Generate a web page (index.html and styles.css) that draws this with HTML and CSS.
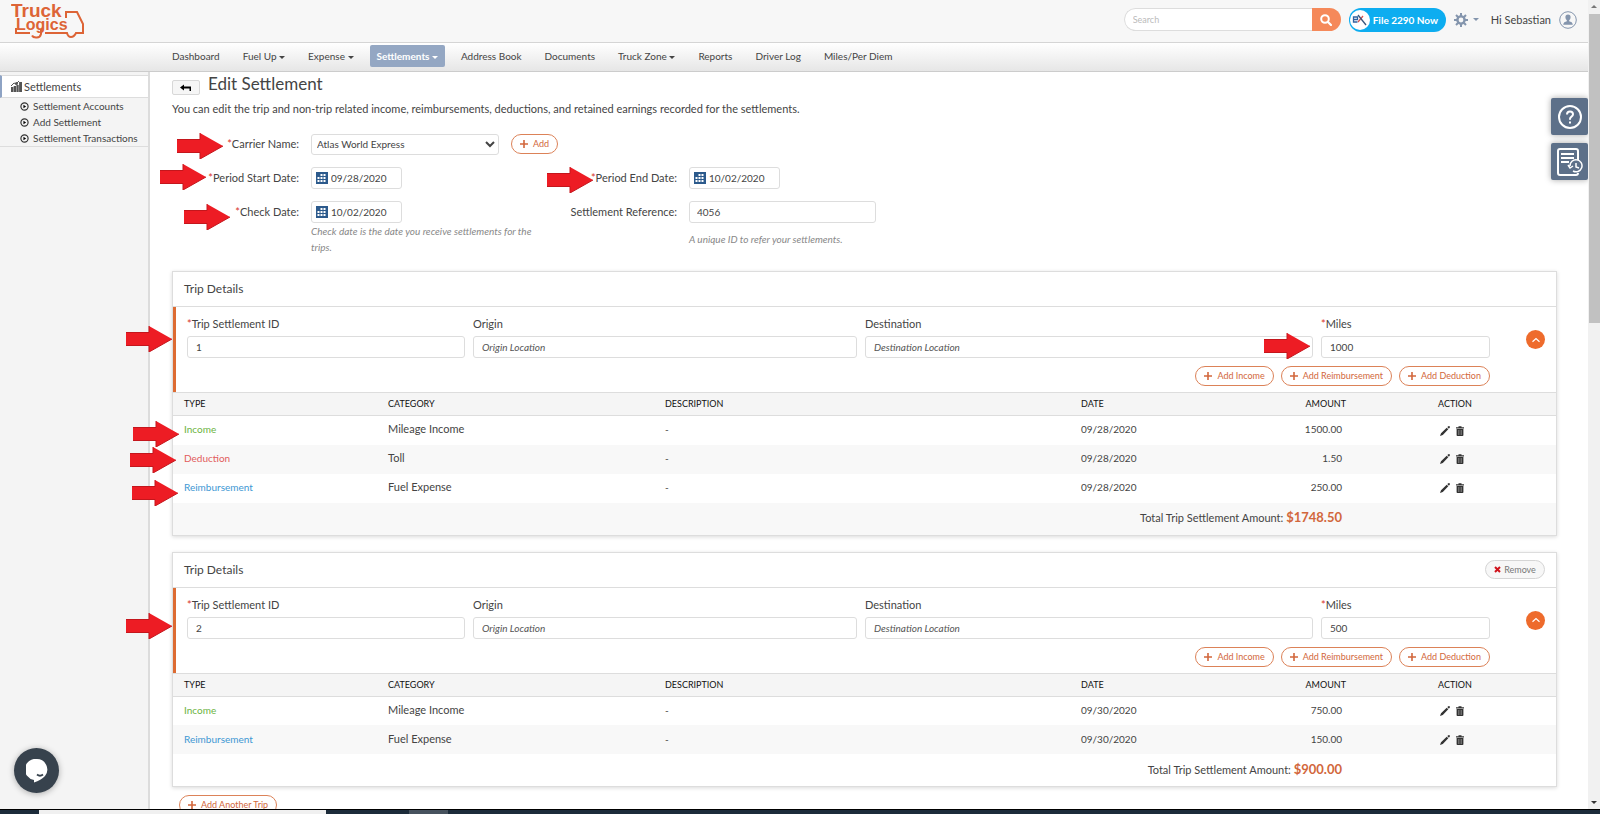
FILE: index.html
```html
<!DOCTYPE html>
<html lang="en">
<head>
    <meta charset="UTF-8">
    <meta name="viewport" content="width=device-width, initial-scale=1.0">
    <title>Edit Settlement - TruckLogics</title>
    <link rel="stylesheet" href="styles.css">
</head>
<body>
    <!-- shared icons -->
    <svg class="sprite" aria-hidden="true">
        <symbol id="plus" viewBox="0 0 8 8"><path d="M3.200 0h1.600v3.200H8v1.600H4.800V8H3.200V4.800H0V3.200h3.200z"/></symbol>
        <symbol id="pencil" viewBox="0 0 10 10"><path d="M0 10l1-2.800L6.700 1.700l1.600 1.600L2.800 9zM7.300 1.100L8.400.2q.5-.4 1 0l.4.400q.4.500 0 1l-.9 1.100z"/></symbol>
        <symbol id="trash" viewBox="0 0 8 10"><path d="M0 1.300h2.500V.3h3v1H8v1.200H0z"/><path d="M.6 3h6.800v6.200q0 .8-.8.800H1.400q-.8 0-.8-.8z"/><path d="M2.500 4v5M4 4v5M5.500 4v5" stroke="#aaa" stroke-width=".5"/></symbol>
        <symbol id="calendar" viewBox="0 0 12 12"><path fill="#2c5a8c" d="M0 0h12v12H0z"/><path fill="#fff" d="M4.500 2h2v2h-2zM7.500 2h2v2h-2zM1.500 5h2v2h-2zM4.500 5h2v2h-2zM7.500 5h2v2h-2zM1.500 8h2v2h-2zM4.500 8h2v2h-2zM7.500 8h2v2h-2z"/></symbol>
        <symbol id="bullet" viewBox="0 0 10 10"><circle cx="5" cy="5" r="4" fill="none" stroke="#333" stroke-width="1.300"/><path d="M3.800 3l3 2-3 2z"/></symbol>
        <symbol id="chevron" viewBox="0 0 10 10"><path d="M1.500 6.700L5 3.500l3.500 3.200" fill="none" stroke="#fff" stroke-width="1.200"/></symbol>
        <symbol id="arrow" viewBox="0 0 46 26"><path d="M0 6.500h23V0l23 13-23 13v-6.500H0z" fill="#ed1c24"/><path d="M0 6.500h23V0M0 19.500h23V26l23-13" fill="none" stroke="#c4161c"/></symbol>
    </svg>

    <div class="window">
        <div class="app">
            <header class="topbar">
                <a href="#" class="logo" aria-label="TruckLogics">
                    <svg width="78" height="38" viewBox="0 0 78 38">
                        <text x="0" y="16" class="word-top">Truck</text>
                        <text x="5" y="29">Logics</text>
                        <path d="M5 27v5h14M30 28v5q-1 4-5 3.500-3 0-4-2M34 32h22q1 4 4 4t5-4h7v-9l-6-12H55v6" fill="none" stroke="#dd6436" stroke-width="2"/>
                    </svg>
                </a>
                <form class="search">
                    <input type="text" placeholder="Search" aria-label="Search">
                    <button type="button" aria-label="Search">
                        <svg width="12" height="12" viewBox="0 0 12 12"><circle cx="5" cy="5" r="3.800" fill="none" stroke="#fff" stroke-width="2"/><path d="M8 8l3 3" stroke="#fff" stroke-width="2.200" stroke-linecap="round"/></svg>
                    </button>
                </form>
                <button type="button" class="file-btn">
                    <svg width="20" height="20" viewBox="0 0 20 20"><circle cx="10" cy="10" r="10" fill="#fff"/><path d="M3.500 9.500H7.500V7H3.500v5H7.500" fill="none" stroke="#2f62a0" stroke-width="1.300"/><path d="M8 12l5-6" stroke="#d9534f" stroke-width="1.300"/><path d="M8 5l8 10" stroke="#38557c" stroke-width="1.300"/></svg>
                    File 2290 Now
                </button>
                <button type="button" class="gear" aria-label="Settings">
                    <svg width="14" height="14" viewBox="0 0 14 14"><circle cx="7" cy="7" r="3.600" fill="none" stroke="#8495ad" stroke-width="2.400"/><path d="M7 0v3M7 11v3M0 7h3M11 7h3M2 2l2.200 2.200M9.800 9.800L12 12M12 2L9.800 4.200M4.200 9.800L2 12" stroke="#8495ad" stroke-width="2"/></svg>
                    <span class="caret"></span>
                </button>
                <span class="user">Hi Sebastian</span>
                <svg class="avatar" width="18" height="18" viewBox="0 0 18 18"><circle cx="9" cy="9" r="8.300" fill="none" stroke="#8495ad"/><path d="M9 3.500q2.600 0 2.600 2.800 0 2-1.400 3v1q3.200.6 3.500 2.700v.8H4.300V13q.3-2.100 3.500-2.700v-1q-1.400-1-1.400-3Q6.400 3.500 9 3.500z" fill="#8495ad"/></svg>
            </header>

            <nav class="menu">
                <a href="#">Dashboard</a>
                <a href="#">Fuel Up <span class="caret"></span></a>
                <a href="#">Expense <span class="caret"></span></a>
                <a href="#" class="active">Settlements <span class="caret"></span></a>
                <a href="#">Address Book</a>
                <a href="#">Documents</a>
                <a href="#">Truck Zone <span class="caret"></span></a>
                <a href="#">Reports</a>
                <a href="#">Driver Log</a>
                <a href="#">Miles/Per Diem</a>
            </nav>

            <div class="content">
                <aside class="sidebar">
                    <a href="#" class="side-title">
                        <svg width="11" height="11" viewBox="0 0 11 11"><path d="M0 11V6h2.300v5zM2.700 11V5h2.300v6zM5.400 11V4h2.300v7zM8.100 11V1h2.900v10z" fill="#555"/><circle cx="5.500" cy="2.500" r="1.500" fill="#555"/><path d="M0 5l3-3 2 1 3-3" fill="none" stroke="#555"/></svg>
                        Settlements
                    </a>
                    <ul>
                        <li><a href="#"><svg><use href="#bullet"/></svg>Settlement Accounts</a></li>
                        <li><a href="#"><svg><use href="#bullet"/></svg>Add Settlement</a></li>
                        <li><a href="#"><svg><use href="#bullet"/></svg>Settlement Transactions</a></li>
                    </ul>
                </aside>

                <main>
                    <div class="heading">
                        <button type="button" class="back" aria-label="Back">
                            <svg width="12" height="8" viewBox="0 0 12 8"><path d="M0 3.500L4 .5v2h7v4.500H9.500V4.500H4v2z"/></svg>
                        </button>
                        <h1>Edit Settlement</h1>
                    </div>
                    <p class="intro">You can edit the trip and non-trip related income, reimbursements, deductions, and retained earnings recorded for the settlements.</p>

                    <form class="settlement-form">
                        <label for="carrier"><i>*</i>Carrier Name:</label>
                        <div class="carrier">
                            <select id="carrier"><option>Atlas World Express</option></select>
                            <button type="button" class="pill"><svg><use href="#plus"/></svg>Add</button>
                        </div>

                        <label for="start" class="first"><i>*</i>Period Start Date:</label>
                        <div class="date"><svg><use href="#calendar"/></svg><input type="text" id="start" value="09/28/2020"></div>
                        <label for="end"><i>*</i>Period End Date:</label>
                        <div class="date"><svg><use href="#calendar"/></svg><input type="text" id="end" value="10/02/2020"></div>

                        <label for="check" class="first"><i>*</i>Check Date:</label>
                        <div>
                            <div class="date"><svg><use href="#calendar"/></svg><input type="text" id="check" value="10/02/2020"></div>
                            <p class="help">Check date is the date you receive settlements for the trips.</p>
                        </div>
                        <label for="reference">Settlement Reference:</label>
                        <div>
                            <input type="text" id="reference" value="4056">
                            <p class="help spaced">A unique ID to refer your settlements.</p>
                        </div>
                    </form>

                    <section class="card">
                        <div class="card-head"><h2>Trip Details</h2></div>
                        <div class="trip">
                            <div class="trip-body">
                                <div class="fields">
                                    <div><label for="id1"><i>*</i>Trip Settlement ID</label><input type="text" id="id1" value="1"></div>
                                    <div><label for="origin1">Origin</label><input type="text" id="origin1" placeholder="Origin Location"></div>
                                    <div><label for="dest1">Destination</label><input type="text" id="dest1" placeholder="Destination Location"></div>
                                    <div><label for="miles1"><i>*</i>Miles</label><input type="text" id="miles1" value="1000"></div>
                                </div>
                                <div class="trip-actions">
                                    <button type="button" class="pill"><svg><use href="#plus"/></svg>Add Income</button>
                                    <button type="button" class="pill"><svg><use href="#plus"/></svg>Add Reimbursement</button>
                                    <button type="button" class="pill"><svg><use href="#plus"/></svg>Add Deduction</button>
                                </div>
                            </div>
                            <button type="button" class="toggle" aria-label="Collapse"><svg><use href="#chevron"/></svg></button>
                        </div>
                        <table>
                            <thead>
                                <tr><th class="type">Type</th><th class="category">Category</th><th>Description</th><th class="day">Date</th><th class="amount">Amount</th><th class="action">Action</th></tr>
                            </thead>
                            <tbody>
                                <tr><td class="income">Income</td><td class="name">Mileage Income</td><td>-</td><td>09/28/2020</td><td class="amount">1500.00</td><td class="action"><button type="button" aria-label="Edit"><svg><use href="#pencil"/></svg></button><button type="button" aria-label="Delete"><svg><use href="#trash"/></svg></button></td></tr>
                                <tr><td class="deduction">Deduction</td><td class="name">Toll</td><td>-</td><td>09/28/2020</td><td class="amount">1.50</td><td class="action"><button type="button" aria-label="Edit"><svg><use href="#pencil"/></svg></button><button type="button" aria-label="Delete"><svg><use href="#trash"/></svg></button></td></tr>
                                <tr><td class="reimbursement">Reimbursement</td><td class="name">Fuel Expense</td><td>-</td><td>09/28/2020</td><td class="amount">250.00</td><td class="action"><button type="button" aria-label="Edit"><svg><use href="#pencil"/></svg></button><button type="button" aria-label="Delete"><svg><use href="#trash"/></svg></button></td></tr>
                                <tr><td colspan="5" class="amount total">Total Trip Settlement Amount: <b>$1748.50</b></td><td></td></tr>
                            </tbody>
                        </table>
                    </section>

                    <section class="card">
                        <div class="card-head">
                            <h2>Trip Details</h2>
                            <button type="button" class="remove"><svg width="7" height="7" viewBox="0 0 7 7"><path d="M1 1l5 5M6 1L1 6" stroke="#d0121b" stroke-width="2"/></svg>Remove</button>
                        </div>
                        <div class="trip">
                            <div class="trip-body">
                                <div class="fields">
                                    <div><label for="id2"><i>*</i>Trip Settlement ID</label><input type="text" id="id2" value="2"></div>
                                    <div><label for="origin2">Origin</label><input type="text" id="origin2" placeholder="Origin Location"></div>
                                    <div><label for="dest2">Destination</label><input type="text" id="dest2" placeholder="Destination Location"></div>
                                    <div><label for="miles2"><i>*</i>Miles</label><input type="text" id="miles2" value="500"></div>
                                </div>
                                <div class="trip-actions">
                                    <button type="button" class="pill"><svg><use href="#plus"/></svg>Add Income</button>
                                    <button type="button" class="pill"><svg><use href="#plus"/></svg>Add Reimbursement</button>
                                    <button type="button" class="pill"><svg><use href="#plus"/></svg>Add Deduction</button>
                                </div>
                            </div>
                            <button type="button" class="toggle" aria-label="Collapse"><svg><use href="#chevron"/></svg></button>
                        </div>
                        <table>
                            <thead>
                                <tr><th class="type">Type</th><th class="category">Category</th><th>Description</th><th class="day">Date</th><th class="amount">Amount</th><th class="action">Action</th></tr>
                            </thead>
                            <tbody>
                                <tr><td class="income">Income</td><td class="name">Mileage Income</td><td>-</td><td>09/30/2020</td><td class="amount">750.00</td><td class="action"><button type="button" aria-label="Edit"><svg><use href="#pencil"/></svg></button><button type="button" aria-label="Delete"><svg><use href="#trash"/></svg></button></td></tr>
                                <tr><td class="reimbursement">Reimbursement</td><td class="name">Fuel Expense</td><td>-</td><td>09/30/2020</td><td class="amount">150.00</td><td class="action"><button type="button" aria-label="Edit"><svg><use href="#pencil"/></svg></button><button type="button" aria-label="Delete"><svg><use href="#trash"/></svg></button></td></tr>
                                <tr><td colspan="5" class="amount total">Total Trip Settlement Amount: <b>$900.00</b></td><td></td></tr>
                            </tbody>
                        </table>
                    </section>

                    <button type="button" class="pill another"><svg><use href="#plus"/></svg>Add Another Trip</button>
                </main>
            </div>

            <div class="float-tools">
                <button type="button" aria-label="Help">
                    <svg width="24" height="24" viewBox="0 0 24 24" fill="none" stroke="#fff" stroke-width="2"><circle cx="12" cy="12" r="11"/><path d="M9 9.500q0-3 3-3t3 2.800q0 1.500-1.500 2.400T12 14v.800M12 16.500v2"/></svg>
                </button>
                <button type="button" aria-label="History">
                    <svg width="26" height="28" viewBox="0 0 26 28" fill="none" stroke="#fff" stroke-width="2"><path d="M21 12V3q0-2-2-2H3Q1 1 1 3v22q0 2 2 2h16q2 0 2-2M4 6h13M4 10h13M4 14h8"/><path d="M13 18a6 6 0 1 1 3 5M11 17l2 3 3-2M19 15v4l3 1" stroke-width="1.500"/></svg>
                </button>
            </div>
            <button type="button" class="chat" aria-label="Chat">
                <svg width="22" height="24" viewBox="0 0 22 24"><path d="M11 0a10.500 10.500 0 0 1 8 17Q15 21 8 23.500V21A10.500 10.500 0 0 1 11 0z" fill="#fff"/><path d="M11 15.500q3 2.500 6 0" fill="none" stroke="#37424d" stroke-width="1.800"/></svg>
            </button>

            <!-- guide arrows -->
            <div class="guide">
                <svg class="a-carrier"><use href="#arrow"/></svg>
                <svg class="a-start"><use href="#arrow"/></svg>
                <svg class="a-check"><use href="#arrow"/></svg>
                <svg class="a-end"><use href="#arrow"/></svg>
                <svg class="a-trip1"><use href="#arrow"/></svg>
                <svg class="a-income"><use href="#arrow"/></svg>
                <svg class="a-deduction"><use href="#arrow"/></svg>
                <svg class="a-reimb"><use href="#arrow"/></svg>
                <svg class="a-miles"><use href="#arrow"/></svg>
                <svg class="a-trip2"><use href="#arrow"/></svg>
            </div>
        </div>

        <div class="scrollbar"><span class="up"></span><span class="thumb"></span><span class="down"></span></div>
    </div>
    <div class="taskbar"><span class="open"></span><span class="idle"></span></div>
</body>
</html>
```
FILE: styles.css
```css
* {
    box-sizing: border-box;
}

body {
    margin: 0;
    height: 100vh;
    display: flex;
    flex-direction: column;
    overflow: hidden;
    font-family: Lato, "Liberation Sans", sans-serif;
    font-size: 11px;
    line-height: 16px;
    color: #444;
    background: #fff;
}

h1, h2, p, ul {
    margin: 0;
    padding: 0;
    font-weight: 400;
}

a {
    color: inherit;
    text-decoration: none;
}

button, input, select {
    font: inherit;
    color: inherit;
    margin: 0;
}

button {
    padding: 0;
    border: none;
    background: none;
    cursor: pointer;
}

i {
    font-style: normal;
    color: #d9362b;
}

.sprite {
    position: absolute;
    width: 0;
    height: 0;
}

.window {
    flex: 1;
    min-height: 0;
    display: flex;
}

.app {
    position: relative;
    flex: 1;
    min-width: 0;
    display: flex;
    flex-direction: column;
    overflow: hidden;
}

/* top bar */
.topbar {
    flex: none;
    display: flex;
    align-items: center;
    height: 43px;
    padding: 0 11px;
    padding-bottom: 3px;
    background: #f7f7f7;
    border-bottom: 1px solid #d5d5d5;
}

.logo {
    margin-right: auto;
    height: 38px;
}

.logo text {
    font: bold 16px "Liberation Sans", sans-serif;
    fill: #dd6436;
}

.logo .word-top {
    font-size: 19px;
}

.search {
    display: flex;
    width: 217px;
    height: 23px;
    border-radius: 12px;
    overflow: hidden;
}

.search input {
    flex: 1;
    min-width: 0;
    height: 23px;
    padding: 0 8px;
    border: 1px solid #ddd;
    border-right: none;
    border-radius: 12px 0 0 12px;
    font-size: 9px;
}

.search input::placeholder {
    color: #bbb;
}

.search button {
    display: flex;
    align-items: center;
    justify-content: center;
    width: 29px;
    background: #f5895a;
}

.file-btn {
    display: flex;
    align-items: center;
    gap: 3px;
    width: 97px;
    height: 24px;
    margin-left: 8px;
    padding-left: 1px;
    border-radius: 12px;
    background: #0dadf0;
    color: #fff;
    font-weight: 700;
    font-size: 10px;
    white-space: nowrap;
}

.gear {
    display: flex;
    align-items: center;
    gap: 5px;
    margin-left: 8px;
    color: #8495ad;
}

.user {
    margin-left: 12px;
}

.avatar {
    margin-left: 8px;
}

.caret {
    display: inline-block;
    border: 3px solid transparent;
    border-top-color: currentColor;
    border-bottom: none;
    vertical-align: middle;
}

/* menu */
.menu {
    flex: none;
    display: flex;
    align-items: center;
    gap: 9px;
    height: 29px;
    padding: 0 0 2px 165px;
    background: linear-gradient(#fff, #e6e6e6);
    border-bottom: 1px solid #ccc;
}

.menu a {
    padding: 3px 7px;
    border-radius: 2px;
    font-size: 10px;
}

.menu .active {
    background: #94a7c3;
    color: #fff;
    font-weight: 700;
}

.content {
    flex: 1;
    min-height: 0;
    display: flex;
}

/* sidebar */
.sidebar {
    flex: none;
    width: 150px;
    padding-top: 3px;
    background: #f4f4f4;
    border-right: 2px solid #dcdcdc;
}

.side-title {
    display: flex;
    align-items: center;
    gap: 2px;
    height: 23px;
    padding-left: 9px;
    background: #fff;
    border: 1px solid #ddd;
    border-width: 1px 0;
    border-left: 2px solid #8ea3c4;
}

.sidebar ul {
    list-style: none;
    padding-left: 20px;
    border-bottom: 1px solid #ddd;
}

.sidebar li a {
    display: flex;
    align-items: center;
    gap: 4px;
    font-size: 10px;
    white-space: nowrap;
}

.sidebar li svg {
    width: 9px;
    height: 9px;
}

/* main */
main {
    flex: 1;
    min-width: 0;
    padding: 0 31px 0 22px;
}

.heading {
    display: flex;
    gap: 8px;
    height: 29px;
}

.back {
    width: 28px;
    height: 15px;
    margin-top: 8px;
    background: #f6f6f6;
    border: 1px solid #d8d8d8;
    border-radius: 2px;
    line-height: 0;
}

h1 {
    font-size: 17px;
    line-height: 24px;
}

input, select {
    background: #fff;
    border: 1px solid #ddd;
    border-radius: 3px;
}

.settlement-form {
    display: grid;
    grid-template-columns: 127px 246px 108px 187px;
    gap: 12px;
    margin: 16px 0;
}

.settlement-form label {
    text-align: right;
    line-height: 22px;
    white-space: nowrap;
}

.settlement-form .first {
    grid-column: 1;
}

.carrier {
    display: flex;
    align-items: center;
    gap: 12px;
}

.carrier select {
    flex: none;
    width: 188px;
    height: 21px;
    padding: 0 0 0 1px;
    font-size: 10px;
}

.date {
    display: flex;
    align-items: center;
    gap: 3px;
    width: 91px;
    height: 22px;
    padding-left: 4px;
    border: 1px solid #ddd;
    border-radius: 3px;
}

.date svg {
    flex: none;
    width: 12px;
    height: 12px;
}

.date input {
    width: 68px;
    padding: 0;
    border: none;
    background: none;
    font-size: 10px;
}

#reference {
    display: block;
    width: 100%;
    height: 22px;
    padding: 0 7px;
    font-size: 10px;
}

.help {
    max-width: 230px;
    color: #888;
    font-size: 10px;
    font-style: italic;
}

.spaced {
    margin-top: 8px;
}

.pill {
    display: flex;
    align-items: center;
    justify-content: center;
    gap: 5px;
    height: 20px;
    padding: 0 8px;
    border: 1px solid #dc8258;
    border-radius: 10px;
    background: #fff;
    color: #d2673c;
    font-size: 9px;
    white-space: nowrap;
}

.pill svg {
    width: 8px;
    height: 8px;
    fill: #d2673c;
}

/* trip cards */
.card {
    margin-bottom: 16px;
    border: 1px solid #ddd;
    box-shadow: 0 1px 4px rgba(0, 0, 0, 0.15);
}

.card-head {
    display: flex;
    align-items: center;
    justify-content: space-between;
    height: 35px;
    padding: 0 11px;
    border-bottom: 1px solid #ddd;
}

h2 {
    font-size: 12px;
}

.remove {
    display: flex;
    align-items: center;
    justify-content: center;
    gap: 3px;
    width: 60px;
    height: 19px;
    border: 1px solid #d5d5d5;
    border-radius: 10px;
    background: #f7f7f7;
    color: #777;
    font-size: 9px;
}

.trip {
    display: flex;
    align-items: flex-start;
    padding: 9px 11px 6px;
    border-left: 3px solid #dd6b32;
}

.trip-body {
    flex: 1;
}

.fields {
    display: grid;
    grid-template-columns: 278fr 384fr 448fr 169fr;
    gap: 8px;
}

.fields label {
    display: block;
    margin-bottom: 4px;
}

.fields input {
    display: block;
    width: 100%;
    height: 22px;
    padding: 0 8px;
    font-size: 10px;
}

.fields input::placeholder {
    color: #555;
    font-style: italic;
}

.trip-actions {
    display: flex;
    justify-content: flex-end;
    gap: 7px;
    margin-top: 8px;
}

.toggle {
    display: flex;
    align-items: center;
    justify-content: center;
    width: 19px;
    height: 19px;
    margin: 14px 0 0 36px;
    border-radius: 50%;
    background: #ee6b2c;
}

.toggle svg {
    width: 10px;
    height: 10px;
}

table {
    width: 100%;
    border-collapse: collapse;
    table-layout: fixed;
}

th, td {
    height: 29px;
    padding: 0 11px;
    font-size: 10px;
    text-align: left;
}

td {
    padding-bottom: 2px;
}

th {
    height: 23px;
    background: #f5f5f5;
    border: 1px solid #ddd;
    border-width: 1px 0;
    font-size: 9px;
    font-weight: 400;
    text-transform: uppercase;
    color: #111;
}

tbody tr:nth-child(even) {
    background: #f8f8f8;
}

.name, .total {
    font-size: 11px;
}

.total {
    height: 32px;
}

.type {
    width: 204px;
}

.category {
    width: 277px;
}

.day {
    width: 140px;
}

.amount {
    width: 147px;
    text-align: right;
}

td.amount {
    padding-right: 15px;
}

.amount b {
    color: #d2673c;
    font-size: 13px;
}

.action {
    width: 199px;
    padding-left: 81px;
}

td.action {
    padding-left: 83px;
}

.action button {
    margin-right: 5px;
    vertical-align: middle;
    line-height: 0;
}

.action svg {
    width: 10px;
    height: 10px;
    fill: #333;
}

.income {
    color: #6cb33f;
}

.deduction {
    color: #e25c5c;
}

.reimbursement {
    color: #3d97d3;
}

.another {
    margin: -8px 0 0 7px;
}

/* floating buttons */
.float-tools {
    position: absolute;
    top: 98px;
    right: 0;
    display: flex;
    flex-direction: column;
    gap: 8px;
}

.float-tools button {
    display: flex;
    align-items: center;
    justify-content: center;
    width: 37px;
    height: 37px;
    background: #5d7089;
    border-radius: 2px;
    box-shadow: 0 0 6px rgba(0, 0, 0, 0.35);
}

.chat {
    position: absolute;
    left: 14px;
    bottom: 16px;
    display: flex;
    align-items: center;
    justify-content: center;
    width: 45px;
    height: 45px;
    border-radius: 50%;
    background: #37424d;
    box-shadow: 0 1px 6px rgba(0, 0, 0, 0.3);
}

/* guide arrows */
.guide svg {
    position: absolute;
    width: 46px;
    height: 26px;
}

.guide .a-carrier { left: 177px; top: 133px; }
.guide .a-start { left: 160px; top: 164px; }
.guide .a-check { left: 184px; top: 204px; }
.guide .a-end { left: 547px; top: 167px; }
.guide .a-trip1 { left: 126px; top: 326px; }
.guide .a-income { left: 133px; top: 421px; }
.guide .a-deduction { left: 130px; top: 447px; }
.guide .a-reimb { left: 132px; top: 480px; }
.guide .a-miles { right: 278px; top: 333px; }
.guide .a-trip2 { left: 126px; top: 613px; }

/* window edges */
.scrollbar {
    flex: none;
    display: flex;
    flex-direction: column;
    align-items: center;
    width: 12px;
    padding: 5px 0;
    background: #f1f1f1;
}

.scrollbar .up {
    border: 3px solid transparent;
    border-top: none;
    border-bottom-color: #777;
}

.scrollbar .thumb {
    width: 11px;
    height: 309px;
    margin-top: 6px;
    background: #c1c1c1;
}

.scrollbar .down {
    margin-top: auto;
    border: 3px solid transparent;
    border-bottom: none;
    border-top-color: #333;
}

.taskbar {
    flex: none;
    display: flex;
    height: 5px;
    background: #1c2b3a;
    border-top: 1px solid #000;
}

.taskbar .open {
    width: 287px;
    margin-left: 39px;
    background: #f0f0f0;
}

.taskbar .idle {
    width: 39px;
    margin-left: 83px;
    background: #47525e;
}
```
